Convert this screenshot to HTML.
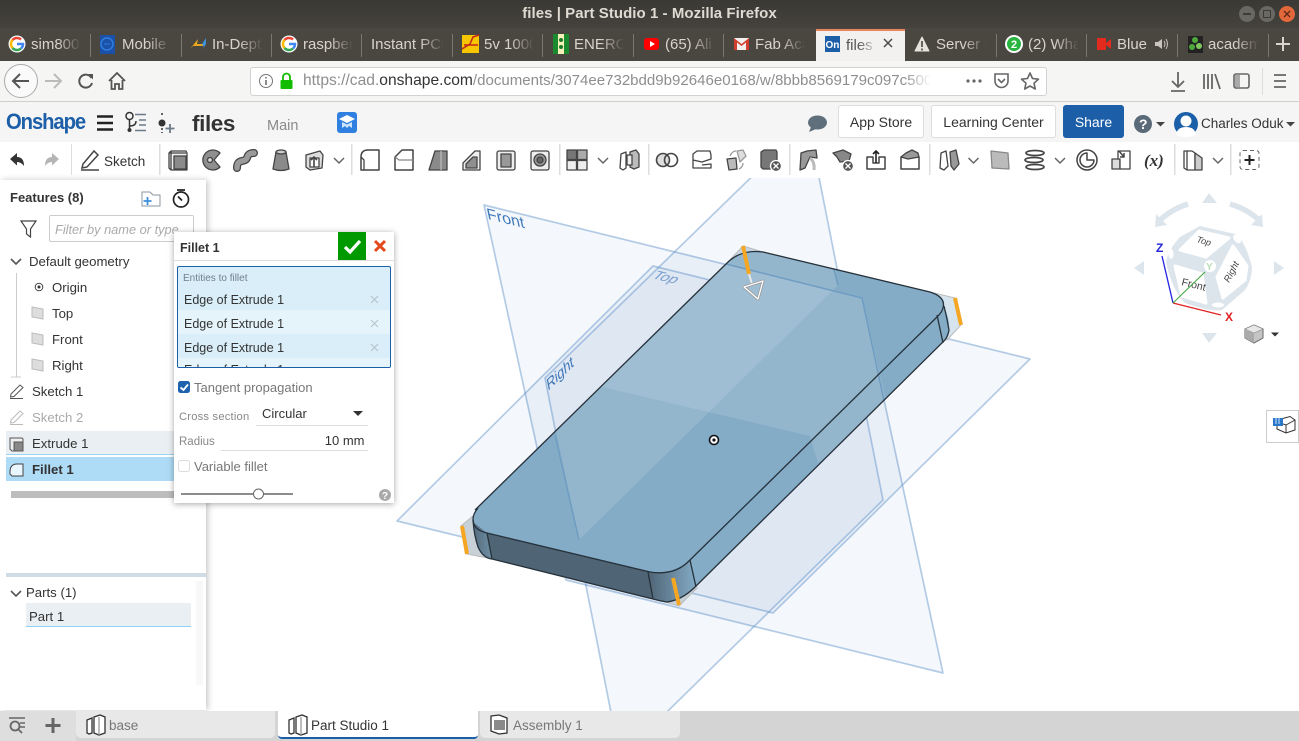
<!DOCTYPE html>
<html><head><meta charset="utf-8"><title>files | Part Studio 1 - Mozilla Firefox</title>
<style>
html,body{margin:0;padding:0;width:1299px;height:741px;overflow:hidden;background:#fff;font-family:"Liberation Sans",sans-serif;}
.a{position:absolute;}
.t{position:absolute;white-space:nowrap;height:20px;line-height:20px;}
.tab{position:absolute;top:28px;height:33px;line-height:34px;color:#d9d5cd;font-size:15px;white-space:nowrap;overflow:hidden;}
.fade{position:absolute;top:30px;height:30px;width:24px;background:linear-gradient(to right,rgba(74,70,64,0),#4a4640);}
.sep{position:absolute;top:34px;height:23px;width:1px;background:#7b7770;}
.btn{position:absolute;top:105px;height:31px;line-height:32px;border:1px solid #ddd;border-radius:3px;background:#fff;text-align:center;font-size:14px;color:#333;box-sizing:content-box;}
.f{font-size:13.200px;color:#333;}
.row{position:absolute;left:178px;width:213px;}
svg{position:absolute;overflow:visible;}
</style></head><body>

<!-- title bar -->
<div class="a" style="left:0;top:0;width:1299px;height:28px;background:linear-gradient(#3a3935,#45423c);"></div>
<div class="a" style="left:0;top:28px;width:1299px;height:33px;background:#4a4640;"></div>
<div class="t" style="left:0;width:1299px;text-align:center;top:4px;font-size:15px;font-weight:bold;color:#dfdbd2;letter-spacing:.05px;">files | Part Studio 1 - Mozilla Firefox</div>
<svg style="left:0;top:0" width="1299" height="28">
<circle cx="1247" cy="14" r="8" fill="#6a6862"/><rect x="1243" y="13" width="8" height="2" fill="#3c3b37"/>
<circle cx="1267" cy="14" r="8" fill="#6a6862"/><rect x="1263.500" y="10.500" width="7" height="7" fill="none" stroke="#3c3b37"/>
<circle cx="1287" cy="14" r="8" fill="#e2673a"/><path d="M1284,11 L1290,17 M1290,11 L1284,17" stroke="#5c2a15" stroke-width="1.300"/>
</svg>

<!-- tabs -->
<div class="a" style="left:816px;top:29px;width:89px;height:32px;background:#f2f1ef;border-top:2px solid #e9855c;box-sizing:border-box;"></div>
<div class="tab" style="left:31px;width:49px;">sim800</div><div class="fade" style="left:57px"></div>
<div class="tab" style="left:122px;width:48px;">Mobile</div><div class="fade" style="left:147px"></div>
<div class="tab" style="left:212px;width:50px;">In-Depth</div><div class="fade" style="left:239px"></div>
<div class="tab" style="left:303px;width:49px;">raspberry</div><div class="fade" style="left:329px"></div>
<div class="tab" style="left:371px;width:72px;">Instant PCB</div><div class="fade" style="left:420px"></div>
<div class="tab" style="left:484px;width:49px;">5v 1000</div><div class="fade" style="left:510px"></div>
<div class="tab" style="left:574px;width:49px;">ENERGY</div><div class="fade" style="left:600px"></div>
<div class="tab" style="left:665px;width:49px;">(65) Ali</div><div class="fade" style="left:691px"></div>
<div class="tab" style="left:755px;width:49px;">Fab Acad</div><div class="fade" style="left:781px"></div>
<div class="tab" style="left:846px;width:35px;color:#555;top:29px;">files</div>
<div class="a" style="left:858px;top:31px;width:20px;height:29px;background:linear-gradient(to right,rgba(242,241,239,0),#f2f1ef);"></div>
<div class="tab" style="left:936px;width:50px;">Server N</div><div class="fade" style="left:963px"></div>
<div class="tab" style="left:1028px;width:50px;">(2) What</div><div class="fade" style="left:1055px"></div>
<div class="tab" style="left:1117px;width:34px;">Blue</div>
<div class="tab" style="left:1208px;width:50px;">academ</div><div class="fade" style="left:1235px"></div>
<div class="sep" style="left:90px"></div><div class="sep" style="left:181px"></div><div class="sep" style="left:271px"></div><div class="sep" style="left:361px"></div><div class="sep" style="left:452px"></div><div class="sep" style="left:542px"></div><div class="sep" style="left:633px"></div><div class="sep" style="left:723px"></div><div class="sep" style="left:996px"></div><div class="sep" style="left:1086px"></div><div class="sep" style="left:1177px"></div><div class="sep" style="left:1268px"></div>
<svg style="left:0;top:28px" width="1299" height="33">
<g id="gg"><circle cx="17" cy="16" r="8.500" fill="#fff"/><path d="M17,10 A6,6 0 0 1 21,11.500" stroke="#ea4335" stroke-width="2.500" fill="none"/><path d="M12.500,12 A6,6 0 0 1 17,10" stroke="#ea4335" stroke-width="2.500" fill="none"/><path d="M12.500,12 A6,6 0 0 0 12.500,20" stroke="#fbbc05" stroke-width="2.500" fill="none"/><path d="M12.500,20 A6,6 0 0 0 21,20.500" stroke="#34a853" stroke-width="2.500" fill="none"/><path d="M21,20.500 A6,6 0 0 0 23,16 H17" stroke="#4285f4" stroke-width="2.500" fill="none"/></g>
<use href="#gg" x="272"/>
<rect x="100" y="7" width="15" height="19" fill="#1b52a8"/><circle cx="107" cy="16" r="6" fill="none" stroke="#2f7de0" stroke-width="1.500"/><path d="M104,16 H110" stroke="#2f7de0"/>
<path d="M190,21 L198,11 L197,16 H205 L203,18 H193Z" fill="#e9a61f"/><path d="M204,19 L200,26 L206,16 L206,10 L202,16Z" fill="#3f93d8"/>
<rect x="462" y="7" width="17" height="18" fill="#f7c600"/><path d="M462,21 L470,16 L473,9 L479,7 M464,17 H478" stroke="#c3271a" stroke-width="1.500" fill="none"/>
<rect x="553" y="6" width="16" height="20" fill="#198a2d"/><rect x="558" y="6" width="6" height="20" fill="#f5f1b8"/><circle cx="561" cy="12" r="2" fill="#1a7a2a"/><circle cx="561" cy="19" r="2" fill="#1a7a2a"/>
<rect x="644" y="10" width="15" height="12" rx="3" fill="#f00"/><path d="M650,13 L655,16 L650,19Z" fill="#fff"/>
<rect x="734" y="10" width="15" height="12" fill="#f4f0ee"/><path d="M734,10 L741.500,16 L749,10 V22 H746 V14.500 L741.500,18 L737,14.500 V22 H734Z" fill="#d23f31"/>
<rect x="825" y="8" width="15" height="16" fill="#1c5ea8"/><text x="825.500" y="20" font-size="10" font-weight="bold" fill="#fff" font-family="Liberation Sans">On</text>
<path d="M884,11 L892,19 M892,11 L884,19" stroke="#4a4a4a" stroke-width="1.500"/>
<path d="M915,23 L922,9 L929,23Z" fill="#e6e3dd" stroke="#e6e3dd" stroke-linejoin="round"/><path d="M922,13 V19 M922,20.500 V22.500" stroke="#4a4640" stroke-width="1.600"/>
<circle cx="1014" cy="16" r="9" fill="#fff"/><circle cx="1014" cy="16" r="7" fill="#29b43f"/><text x="1011" y="20" font-size="11" font-weight="bold" fill="#fff" font-family="Liberation Sans">2</text>
<rect x="1097" y="10" width="9" height="12" fill="#e32a1e"/><path d="M1106,15 L1111,11 V21 L1106,17Z" fill="#e32a1e"/>
<path d="M1155,14 H1158 L1162,11 V21 L1158,18 H1155Z" fill="#c9c5bd"/><path d="M1164,13 Q1166,16 1164,19 M1166,11 Q1169,16 1166,21" stroke="#c9c5bd" fill="none"/>
<rect x="1188" y="8" width="15" height="17" fill="#222"/><circle cx="1195" cy="12" r="3" fill="#4ea83c"/><circle cx="1192" cy="19" r="3" fill="#4ea83c"/><circle cx="1199" cy="18" r="3" fill="#7fc75e"/>
<path d="M1283,9 V23 M1276,16 H1290" stroke="#d9d5cd" stroke-width="2"/>
</svg>

<!-- nav bar -->
<div class="a" style="left:0;top:61px;width:1299px;height:40px;background:#f5f5f3;border-bottom:1px solid #cfcfcd;"></div>
<div class="a" style="left:250px;top:67px;width:795px;height:27px;background:#fff;border:1px solid #d2d2d0;border-radius:3px;"></div>
<div class="t" style="left:303px;top:71px;font-size:15.600px;color:#8e8e8e;width:627px;overflow:hidden;">https://cad.<span style="color:#333">onshape.com</span><span style="font-size:15.050px">/documents/3074ee732bdd9b92646e0168/w/8bbb8569179c097c500</span></div>
<div class="a" style="left:905px;top:68px;width:26px;height:26px;background:linear-gradient(to right,rgba(255,255,255,0),#fff);"></div>
<svg style="left:0;top:61px" width="1299" height="40">
<circle cx="21" cy="20" r="16.500" fill="#fafafa" stroke="#aaa"/>
<path d="M29,20 H13 M20,13 L13,20 L20,27" stroke="#555" stroke-width="2" fill="none"/>
<path d="M45,20 H61 M54,13 L61,20 L54,27" stroke="#bbb" stroke-width="2" fill="none"/>
<path d="M91.500,17 A6.500,6.500 0 1 0 92,22" stroke="#555" stroke-width="2" fill="none"/><path d="M88,13 L93,13 L93,18.500Z" fill="#555"/>
<path d="M109,20 L117,12 L125,20 M111.500,19 V28 H115 V23 H119 V28 H122.500 V19" stroke="#555" stroke-width="1.800" fill="none"/>
<circle cx="266" cy="20" r="6.500" fill="none" stroke="#777"/><path d="M266,19 V24 M266,16 V17.500" stroke="#666" stroke-width="1.500"/>
<rect x="280.500" y="19" width="12" height="9" rx="1" fill="#12bc00"/><path d="M283,19 V16 A3.500,3.500 0 0 1 290,16 V19" fill="none" stroke="#12bc00" stroke-width="1.800"/>
<circle cx="968" cy="20" r="1.600" fill="#666"/><circle cx="974" cy="20" r="1.600" fill="#666"/><circle cx="980" cy="20" r="1.600" fill="#666"/>
<path d="M995,13 H1008 V20 A6.500,6.500 0 0 1 995,20Z" fill="none" stroke="#666" stroke-width="1.600"/><path d="M998,18 L1001.500,21.500 L1005,18" stroke="#666" stroke-width="1.600" fill="none"/>
<path d="M1030,12 L1032.500,17.500 L1038.500,18.200 L1034,22.200 L1035.300,28 L1030,25 L1024.700,28 L1026,22.200 L1021.500,18.200 L1027.500,17.500Z" fill="none" stroke="#666" stroke-width="1.600" stroke-linejoin="round"/>
<path d="M1178,11 V25 M1172,20 L1178,26 L1184,20 M1171,30 H1185" stroke="#666" stroke-width="1.800" fill="none"/>
<path d="M1204,13 V28 M1208,13 V28 M1212,13 V28 M1215,13 L1220,28" stroke="#666" stroke-width="1.800" fill="none"/>
<rect x="1234" y="13" width="15" height="14" rx="2" fill="none" stroke="#666" stroke-width="1.600"/><rect x="1235" y="14" width="5" height="12" fill="#aaa"/>
<rect x="1262" y="7" width="1" height="27" fill="#ddd"/>
<path d="M1274,14 H1286 M1274,20 H1286 M1274,26 H1286" stroke="#666" stroke-width="1.800"/>
</svg>

<!-- onshape bar -->
<div class="a" style="left:0;top:102px;width:1299px;height:40px;background:#f5f5f5;"></div>
<div class="t" style="left:6px;top:112px;font-size:22.500px;font-weight:bold;color:#1c5ea8;letter-spacing:-1.200px;transform:scaleX(.9);transform-origin:left center;">Onshape</div>
<div class="t" style="left:192px;top:114px;font-size:22.500px;font-weight:bold;color:#333;letter-spacing:-.4px;">files</div>
<div class="t" style="left:267px;top:116px;font-size:14.500px;color:#8a8a8a;">Main</div>
<div class="btn" style="left:838px;width:84px;">App Store</div>
<div class="btn" style="left:931px;width:123px;">Learning Center</div>
<div class="btn" style="left:1063px;width:61px;height:33px;background:#1c5ea8;border:0;color:#fff;line-height:34px;">Share</div>
<div class="t" style="left:1201px;top:114px;font-size:13.500px;color:#333;">Charles Oduk</div>
<svg style="left:0;top:102px" width="1299" height="40">
<path d="M97,14.500 H113 M97,21 H113 M97,27.500 H113" stroke="#222" stroke-width="2.500"/>
<circle cx="129.500" cy="14" r="3.500" fill="none" stroke="#333" stroke-width="1.500"/><circle cx="129.500" cy="28" r="2" fill="#333"/>
<path d="M129.500,17.500 V26 M129.500,24 Q136,24 136,19" fill="none" stroke="#333" stroke-width="1.500"/>
<path d="M135,12.500 H146 M139,18 H146 M139,23 H146 M135,28.500 H146" stroke="#6a7a88" stroke-width="1.500"/>
<path d="M162,11 V15 M162,26 V31" stroke="#333" stroke-width="1.500" stroke-dasharray="2 2"/><circle cx="162" cy="21" r="3.500" fill="#333"/>
<path d="M170,22 V31 M165.500,26.500 H174.500" stroke="#6a7a88" stroke-width="1.800"/>
<rect x="337" y="10" width="20" height="21" rx="3" fill="#2f80e0"/><path d="M339,17 L347,13 L355,17 L347,21Z" fill="#fff"/><path d="M342,20 V26 L345,24 L347,26 L349,24 L352,26 V20 L347,22.500Z" fill="#cfe3fa"/>
<ellipse cx="817.500" cy="20.500" rx="9.500" ry="7" fill="#5f6f7c"/><path d="M811,25 L809,30 L816,27Z" fill="#5f6f7c"/>
<circle cx="1143" cy="22" r="9" fill="#5a6a78"/><text x="1139" y="27" font-size="14" font-weight="bold" fill="#fff" font-family="Liberation Sans">?</text>
<path d="M1156,20 H1165 L1160.500,24.500Z" fill="#444"/>
<circle cx="1186" cy="22" r="12" fill="#1a5fa8"/><circle cx="1186" cy="19" r="5.500" fill="#fff"/><path d="M1176,33 Q1177,25 1186,25 Q1195,25 1196,33 Q1191,35 1186,35 Q1181,35 1176,33Z" fill="#fff"/>
<path d="M1286,20 H1295 L1290.500,24.500Z" fill="#444"/>
</svg>

<!-- toolbar -->
<div class="t" style="left:104px;top:152px;font-size:13.500px;color:#333;">Sketch</div>
<svg style="left:0;top:142px" width="1299" height="36" font-family="Liberation Serif">
<g fill="#ddd"><rect x="71" y="2" width="1" height="31"/><rect x="159" y="2" width="1.500" height="31"/><rect x="351" y="2" width="1.500" height="31"/><rect x="559" y="2" width="1.500" height="31"/><rect x="648" y="2" width="1.500" height="31"/><rect x="789" y="2" width="1.500" height="31"/><rect x="929" y="2" width="1.500" height="31"/><rect x="1174" y="2" width="1.500" height="31"/><rect x="1230" y="2" width="1.500" height="31"/></g>
<path d="M10,17 L17,11 V15 Q24,15 24,24 Q21,20 17,20 V23.500Z" fill="#333"/>
<path d="M59,17 L52,11 V15 Q45,15 45,24 Q48,20 52,20 V23.500Z" fill="#b5b5b5"/>
<path d="M83,22 L94,9 L98,13 L87,25 L82,26Z M81,28 H99" fill="none" stroke="#444" stroke-width="1.500"/>
<g stroke="#444" stroke-width="1.300" stroke-linejoin="round">
<g transform="translate(178,18)"><path d="M-9,-7 L-7,-9 H8 L9,-7 V10 H-7 L-9,8Z" fill="#eee"/><path d="M-7,-9 V10 M-9,-7 H8" fill="none"/><rect x="-4" y="-4" width="12" height="13" fill="#8b8b8b"/></g>
<g transform="translate(212,18)"><path d="M8,-7 A10,10 0 1 0 8,7 L2,0Z" fill="#8f8f8f"/><circle cx="-2" cy="0" r="2.500" fill="#ddd"/></g>
<g transform="translate(245,18)"><path d="M-8,8 C-8,-2 0,3 2,-2 C3,-6 5,-7 9,-7" fill="none" stroke-width="8" stroke-linecap="round"/><path d="M-8,8 C-8,-2 0,3 2,-2 C3,-6 5,-7 9,-7" fill="none" stroke="#9a9a9a" stroke-width="5.500" stroke-linecap="round"/></g>
<g transform="translate(281,18)"><path d="M-5,-8 L-8,9 Q0,12 8,9 L5,-8Z" fill="#8a8a8a"/><ellipse cx="0" cy="-8" rx="5" ry="2" fill="#ccc"/></g>
<g transform="translate(314,18)"><path d="M-8,-5 L6,-9 L9,-5 L8,8 L-4,10 L-8,7Z" fill="#ddd"/><rect x="-4" y="-2" width="9" height="9" fill="#fff"/><path d="M0,7 V-3 M-3,0 L0,-3 L3,0" fill="none" stroke-width="1.600"/></g>
<g transform="translate(370,18)"><path d="M-9,10 V-3 Q-9,-10 -2,-10 H9 V10Z" fill="#fff" stroke-width="1.500"/><path d="M-9,-3 L-6,0 V10" fill="none"/></g>
<g transform="translate(404,18)"><path d="M-9,10 V-3 L-2,-10 H9 V10Z" fill="#fff" stroke-width="1.500"/><path d="M-9,-3 L-5,0 H9" fill="none" stroke="#888"/></g>
<g transform="translate(438,18)"><path d="M-9,10 L-3,-9 H9 V10Z" fill="#8a8a8a"/><path d="M3,-9 V10" stroke="#bbb"/></g>
<g transform="translate(472,18)"><path d="M-9,10 V3 L3,-9 H8 V10Z" fill="#eee"/><path d="M-6,8 V4 L1,-3 H5 V8Z" fill="#8f8f8f"/></g>
<g transform="translate(506,18)"><rect x="-9" y="-9" width="18" height="19" rx="2" fill="#eee"/><rect x="-5" y="-6" width="10" height="13" fill="#999"/></g>
<g transform="translate(540,18)"><rect x="-9" y="-9" width="18" height="19" rx="2" fill="#eee"/><circle cx="0" cy="0" r="6" fill="#999"/><circle cx="0" cy="0" r="3" fill="#666"/></g>
<g transform="translate(577,18)"><rect x="-10" y="-10" width="9.500" height="9.500" fill="#777"/><rect x="0.500" y="-10" width="9.500" height="9.500" fill="#aaa"/><rect x="-10" y="0.500" width="9.500" height="9.500" fill="#eee"/><rect x="0.500" y="0.500" width="9.500" height="9.500" fill="#eee"/></g>
<g transform="translate(629,18)"><path d="M-8,-6 L-3,-8 V8 L-6,10 L-9,8Z" fill="#fff"/><path d="M1,-8 L7,-10 L10,-6 V7 L5,9 L1,7Z" fill="#bbb"/><path d="M-2,-5 H3 V5 H-2Z" fill="#eee"/></g>
<g transform="translate(667,18)"><circle cx="-4" cy="0" r="6.500" fill="#ddd" stroke-width="1.600"/><circle cx="4" cy="0" r="6.500" fill="none" stroke-width="1.600"/></g>
<g transform="translate(702,18)"><path d="M-9,-6 L-5,-9 H8 L9,-5 V-1 L0,2 L-9,0Z" fill="#fff"/><path d="M-9,0 V8 H9 V4 L0,5" fill="none"/></g>
<g transform="translate(736,18)"><path d="M-9,-1 L0,-2 L1,9 L-7,10Z" fill="#bbb"/><path d="M1,-9 L7,-10 L10,-4 L4,2Z" fill="#ddd" stroke="#999"/><path d="M-6,-4 Q-4,-9 0,-9 M7,3 Q7,7 3,9" fill="none" stroke="#999"/></g>
<g transform="translate(770,18)"><path d="M-9,-8 L-6,-10 H6 L7,-8 V9 H-7 L-9,7Z" fill="#777"/><circle cx="6" cy="6" r="5.500" fill="#555" stroke="#fff"/><path d="M3.500,3.500 L8.500,8.500 M8.500,3.500 L3.500,8.500" stroke="#fff"/></g>
<g transform="translate(808,18)"><path d="M-7,-7 L-1,-9 L8,-10 L9,-2 L2,-3 L-3,8 L-8,10Z" fill="#999"/><path d="M2,-2 Q7,2 6,10" fill="none" stroke="#bbb" stroke-width="3"/></g>
<g transform="translate(842,18)"><path d="M-9,-7 L1,-10 L9,-6 L7,1 L-2,2 L-5,-3Z" fill="#888"/><circle cx="6" cy="6" r="5.500" fill="#555" stroke="#fff"/><path d="M3.500,3.500 L8.500,8.500 M8.500,3.500 L3.500,8.500" stroke="#fff"/></g>
<g transform="translate(876,18)"><path d="M-9,-3 L-3,-3 V3 H3 V-3 H9 V9 H-9Z" fill="#fff" stroke-width="1.500"/><path d="M0,3 V-9 M-3,-6 L0,-9 L3,-6" fill="none" stroke="#222" stroke-width="1.600"/></g>
<g transform="translate(910,18)"><path d="M-9,-3 L9,-3 V9 H-9Z" fill="#fff" stroke-width="1.500"/><path d="M-9,-3 L-4,-7 L2,-10 L8,-7 L9,-3 L-2,-1Z" fill="#999"/></g>
<g transform="translate(949,18)"><path d="M-8,-7 L-3,-9 L-1,6 L-5,10 L-9,8Z" fill="#fff"/><path d="M1,-8 L7,-10 L10,4 L5,10 L2,6Z" fill="#999"/></g>
<g transform="translate(1000,18)"><path d="M-9,-9 L8,-7 L9,9 L-8,8Z" fill="#bbb" stroke="#888"/></g>
<g transform="translate(1034,18)" fill="none" stroke-width="1.700"><ellipse cx="1" cy="-7" rx="9" ry="2.500"/><ellipse cx="0" cy="0" rx="9" ry="2.500"/><ellipse cx="1" cy="7" rx="9" ry="2.500"/></g>
<g transform="translate(1087,18)" fill="none" stroke-width="1.500"><circle cx="0" cy="0" r="10"/><path d="M0,-7 A7,7 0 1 0 7,0 H0Z"/></g>
<g transform="translate(1121,18)"><path d="M-9,-1 H-1 V9 H-9Z" fill="#ddd"/><path d="M-3,-9 H9 V9 H-1 V-1 H-3Z" fill="#fff"/><path d="M-2,-9 L3,-3 M3,-7 V-3 H-1" fill="none" stroke-width="1.500"/></g>
<g transform="translate(1193,18)"><path d="M-9,-9 H-1 L2,-7 V10 H-6 L-9,8Z" fill="#fff"/><path d="M2,-7 L9,-2 V10 H2Z" fill="#ccc"/><path d="M-6,-9 V10" fill="none"/></g>
</g>
<g stroke="#666" stroke-width="1.500" fill="none"><path d="M334,16 L339,21 L344,16"/><path d="M598,16 L603,21 L608,16"/><path d="M968.500,16 L973.500,21 L978.500,16"/><path d="M1055,16 L1060,21 L1065,16"/><path d="M1213,16 L1218,21 L1223,16"/></g>
<text x="1144" y="24" font-size="17" font-weight="bold" font-style="italic" fill="#333">(<tspan>x</tspan>)</text>
<rect x="1240" y="8.500" width="19" height="19" rx="3" fill="none" stroke="#666" stroke-dasharray="4 3"/><path d="M1249.500,13 V23 M1244.500,18 H1254.500" stroke="#222" stroke-width="2"/>
</svg>

<!-- 3D scene -->
<svg style="left:0;top:0;" width="1299" height="741" viewBox="0 0 1299 741">
<defs>
<clipPath id="view"><rect x="0" y="178" width="1299" height="533"/></clipPath>
<clipPath id="bodyc"><path d="M475,510 L727,263 Q741,249 763,252 L930,292 Q946,297 944,306 Q950,320 949,330 Q948,336 945,340 L695,587 Q682,600 667,602 Q660,601 653,599 L492,559 Q483,558 478,547 Q473,535 473,519 Q473,514 478,508Z"/></clipPath>
<linearGradient id="cg" x1="0" x2="1" y1="0" y2="0"><stop offset="0" stop-color="#4f6475"/><stop offset="1" stop-color="#84acc7"/></linearGradient>
<linearGradient id="cl" x1="0" x2="1" y1="0" y2="0"><stop offset="0" stop-color="#4f6475"/><stop offset="1" stop-color="#6f8ea5"/></linearGradient>
</defs>
<g clip-path="url(#view)">
<g fill="rgb(60,120,190)" fill-opacity=".06" stroke="rgb(80,135,195)" stroke-opacity=".42" stroke-width="1.700" stroke-linejoin="round">
<path d="M484,205 L862,298 L943,673 L566,580Z"/>
<path d="M397,521 L653,266 L1030,359 L773,613Z"/>
<path d="M545,378 L808,122 L883,500 L620,758Z"/>
</g>
<path d="M473,516 L461,526 L467,554 L492,559Z" fill="#c8d0d8" stroke="#bbb"/>
<path d="M654,599 L679,606 L697,588Z" fill="#c8d0d8" stroke="#bbb"/>
<path d="M727,263 L743,246 L763,252Z" fill="#c5d6e2" stroke="#bbb"/>
<path d="M930,292 L955,298 L961,325 L947,340Z" fill="#d6e4ee" stroke="#bbb"/>
<g clip-path="url(#bodyc)">
<rect x="460" y="240" width="500" height="370" fill="#84acc7"/>
<path d="M470,520 L487,533 L650,572 L653,610 L470,570Z" fill="#4f6475"/>
<path d="M648,572 Q675,576 690,560 L697,590 L675,610 L653,602Z" fill="url(#cg)"/>
<path d="M470,520 L487,533 L492,562 L470,555Z" fill="url(#cl)"/>
<path d="M545,378 L579,540 L838,285 L808,122Z" fill="#fff" fill-opacity=".12"/>
<path d="M590,384 L810,436 L818,463 L847,440 L886,400 L862,298 L722,263 L590,300Z" fill="#fff" fill-opacity=".12"/>
<g stroke="#6f9dc2" stroke-width="1.500" fill="none">
<path d="M722,263 L862,298 L886,410"/>
<path d="M555,435 L579,540"/>
<path d="M832,262 L838,285"/>
</g>
</g>
<g fill="none" stroke="#26323b" stroke-width="1.300">
<path d="M475,510 L727,263 Q741,249 763,252 L930,292 Q946,297 943,308 Q942,312 938,316 L690,560 Q675,576 650,572 L487,533 Q473,530 473,519 Q473,514 478,508Z"/>
<path d="M473,520 Q474,535 478,547 Q483,558 492,559 L653,599 Q660,601 667,602 Q682,600 695,587 L945,340 Q948,336 949,330 Q947,318 944,306"/>
<path d="M487,533 L492,559 M648,572 L653,599 M690,560 L696,587 M937,315 L943,343"/>
</g>
<g stroke="#f5a623" stroke-width="4">
<path d="M743,246 L749,274"/><path d="M955,298 L961,325"/><path d="M462,526 L467,554"/><path d="M673,578 L679,605"/>
</g>
<path d="M749,274 L752,284" stroke="#e8e8e8" stroke-width="2"/>
<path d="M744,287 L763,281 L758,299Z" fill="none" stroke="#999" stroke-width="2.800" stroke-linejoin="round"/>
<path d="M744,287 L763,281 L758,299Z" fill="none" stroke="#fff" stroke-width="1.300" stroke-linejoin="round"/>
<circle cx="714" cy="440" r="4.500" fill="#fff" stroke="#111" stroke-width="1.600"/><circle cx="714" cy="440" r="1.600" fill="#111"/>
<g font-family="Liberation Sans" fill="#3f78b8">
<text transform="matrix(.97,.24,.21,.97,488,219)" font-size="16.500">Front</text>
<text transform="matrix(.97,.24,-.7,.71,651,278)" font-size="15" fill="#7aa0cc">Top</text>
<text transform="matrix(.72,-.7,.2,.98,548,391)" font-size="15.500">Right</text>
</g>
</g>

<!-- view cube -->
<g fill="#dde5ec">
<path d="M1209,193 L1202,203 H1217Z"/><path d="M1134,268 L1144,261 V275Z"/><path d="M1284,268 L1274,261 V275Z"/><path d="M1209,343 L1202,333 H1217Z"/>
<path d="M1188,204 Q1172,209 1160,220" fill="none" stroke="#dde5ec" stroke-width="5.500"/><path d="M1155,227 L1156,214 L1167,225Z"/>
<path d="M1230,204 Q1247,209 1259,220" fill="none" stroke="#dde5ec" stroke-width="5.500"/><path d="M1263,227 L1262,214 L1251,225Z"/>
<path d="M1200,226 L1235,234 Q1245,240 1252,267 Q1252,280 1245,290 L1222,310 Q1210,312 1185,303 Q1172,290 1166,262 Q1168,250 1180,237Z"/>
</g>
<g fill="#fff" stroke="#fff" stroke-width="3" stroke-linejoin="round">
<path d="M1199,231 L1229,238 L1206,257 L1180,250Z"/>
<path d="M1175,266 L1202,274 L1206,303 L1182,296Z"/>
<path d="M1233,246 L1247,266 L1245,280 L1223,298 L1217,277Z"/>
</g>
<ellipse cx="1218" cy="305" rx="6" ry="2.500" fill="#fff"/><ellipse cx="1171" cy="254" rx="2.500" ry="5" fill="#fff"/><ellipse cx="1237" cy="239" rx="3" ry="5" fill="#fff" transform="rotate(-40 1237 239)"/>
<g font-family="Liberation Sans" fill="#444">
<text transform="translate(1196,242) rotate(16)" font-size="9" font-style="italic">Top</text>
<text transform="translate(1181,285) rotate(14)" font-size="10.500">Front</text>
<text transform="translate(1229,283) rotate(-62)" font-size="9.500" font-style="italic">Right</text>
</g>
<circle cx="1210" cy="266" r="6.500" fill="#fff" stroke="#dde5ec"/>
<text x="1206" y="270" font-family="Liberation Sans" font-size="10" font-weight="bold" fill="#b9e0b9">Y</text>
<path d="M1173,303 L1162,256" stroke="#2323e0" stroke-width="1.300"/>
<path d="M1173,303 L1221,315" stroke="#e02323" stroke-width="1.300"/>
<path d="M1173,303 L1205,272" stroke="#3ca83c" stroke-width="1"/>
<text x="1156" y="252" font-family="Liberation Sans" font-size="12" font-weight="bold" fill="#2323d8">Z</text>
<text x="1225" y="321" font-family="Liberation Sans" font-size="12" font-weight="bold" fill="#e02323">X</text>
<path d="M1254,325 L1263,329 V338 L1254,343 L1245,338 V329Z" fill="#c5c5c5" stroke="#666"/><path d="M1245,329 L1254,333 L1263,329 L1254,325Z" fill="#e8e8e8" stroke="#888" stroke-width=".6"/><path d="M1254,333 V343 L1245,338 V329Z" fill="#aaa"/>
<path d="M1271,332.500 H1279 L1275,336.500Z" fill="#333"/>
</svg>

<div class="a" style="left:1266px;top:410px;width:33px;height:33px;border:1px solid #ccc;background:#fff;box-sizing:border-box;"></div>
<svg style="left:1266px;top:410px" width="33" height="33">
<path d="M15,9 L24,6.500 L29,10 V20 L20,23 L11,19 V12Z M11,12 L20,15 L29,10 M20,15 V23" fill="#fff" stroke="#333"/>
<rect x="7" y="8" width="10" height="8" fill="#2a78c8"/><path d="M10,8 V14 M13,8 V14" stroke="#cfe3fa"/>
</svg>

<!-- features panel -->
<div class="a" style="left:0;top:180px;width:206px;height:530px;background:#fff;box-shadow:2px 0 6px rgba(0,0,0,.22);"></div>
<div class="t f" style="left:10px;top:188px;font-weight:bold;color:#333;font-size:13px;">Features (8)</div>
<div class="a" style="left:49px;top:215px;width:145px;height:27px;border:1px solid #ccc;border-radius:2px;box-sizing:border-box;"></div>
<div class="t" style="left:55px;top:220px;font-size:12.800px;font-style:italic;color:#aaa;">Filter by name or type</div>
<div class="t f" style="left:29px;top:252px;">Default geometry</div>
<div class="t f" style="left:52px;top:278px;">Origin</div>
<div class="t f" style="left:52px;top:304px;">Top</div>
<div class="t f" style="left:52px;top:330px;">Front</div>
<div class="t f" style="left:52px;top:356px;">Right</div>
<div class="t f" style="left:32px;top:382px;">Sketch 1</div>
<div class="t f" style="left:32px;top:408px;color:#aaa;">Sketch 2</div>
<div class="a" style="left:6px;top:431px;width:184px;height:24px;background:#eaeff3;border-bottom:1px solid #9fd4f0;box-sizing:border-box;"></div>
<div class="t f" style="left:32px;top:434px;">Extrude 1</div>
<div class="a" style="left:6px;top:457px;width:184px;height:24px;background:#aedbf5;"></div>
<div class="t f" style="left:32px;top:460px;font-weight:bold;">Fillet 1</div>
<div class="a" style="left:11px;top:491px;width:165px;height:7px;background:#bdbdbd;"></div>
<div class="a" style="left:6px;top:573px;width:200px;height:4px;background:#cfdbe5;"></div>
<div class="a" style="left:196px;top:581px;width:7px;height:104px;background:#f8f8f8;"></div>
<div class="t f" style="left:26px;top:583px;">Parts (1)</div>
<div class="a" style="left:26px;top:603px;width:165px;height:24px;background:#eaeff3;border-bottom:1px solid #8fd3f4;box-sizing:border-box;"></div>
<div class="t f" style="left:29px;top:607px;">Part 1</div>
<svg style="left:0;top:180px" width="206" height="460">
<path d="M142,12 H150 L153,15 H160 V26 H142Z" fill="none" stroke="#8a97a2"/><path d="M147.500,17 V25 M143.500,21 H151.500" stroke="#3f8fdc" stroke-width="1.800"/>
<circle cx="181" cy="19.500" r="7.500" fill="none" stroke="#222" stroke-width="1.700"/><path d="M177,10 H185 M178,16.500 L182,20.500" stroke="#222" stroke-width="1.700"/>
<path d="M21,41 H36 L30.500,49 V57 L26.500,54 V49Z" fill="none" stroke="#444" stroke-width="1.200"/>
<path d="M11,79 L16,84 L21,79" stroke="#555" stroke-width="1.600" fill="none"/>
<path d="M16.500,93 V197 M11,197 H21" stroke="#ccc"/>
<circle cx="39" cy="107" r="3.800" fill="none" stroke="#444"/><circle cx="39" cy="107" r="1.500" fill="#333"/>
<g fill="#ddd" stroke="#bbb"><path d="M32,127 L43,129 V139 L32,137Z"/><path d="M32,153 L43,155 V165 L32,163Z"/><path d="M32,179 L43,181 V191 L32,189Z"/></g>
<path d="M11,214 L20,205 L23,207.500 L14,216.500 L10.500,217Z M10,218.500 H23" fill="none" stroke="#555"/>
<path d="M11,240 L20,231 L23,233.500 L14,242.500 L10.500,243Z M10,244.500 H23" fill="none" stroke="#bbb"/>
<g stroke="#555"><path d="M10,258 H22 L23,259 V271 H12 L10,269Z" fill="#eee"/><rect x="14" y="262" width="9" height="9" fill="#888"/></g>
<path d="M10,292 Q10,284 17,284 H23 V296 H12 L10,294Z" fill="#eaf6fd" stroke="#444"/>
<path d="M11,411 L16,416 L21,411" stroke="#555" stroke-width="1.600" fill="none"/>
</svg>

<!-- fillet dialog -->
<div class="a" style="left:174px;top:232px;width:220px;height:271px;background:#fff;box-shadow:0 1px 6px rgba(0,0,0,.35);"></div>
<div class="t" style="left:180px;top:238px;font-size:12.500px;font-weight:bold;color:#333;">Fillet 1</div>
<div class="a" style="left:338px;top:232px;width:28px;height:28px;background:#009a00;"></div>
<div class="a" style="left:174px;top:260px;width:220px;height:1px;background:#ddd;"></div>
<div class="a" style="left:177px;top:266px;width:214px;height:102px;border:1px solid #1a5fa8;border-radius:2px;background:#d9eef8;box-sizing:border-box;overflow:hidden;">
  <div class="a" style="left:0;top:43px;width:212px;height:24px;background:#e5f4fb;"></div>
  <div class="a" style="left:0;top:91px;width:212px;height:12px;background:#e5f4fb;"></div>
  <div class="t" style="left:5px;top:2px;font-size:10px;color:#6f7f8a;">Entities to fillet</div>
  <div class="t" style="left:6px;top:23px;font-size:12.500px;color:#333;">Edge of Extrude 1</div>
  <div class="t" style="left:6px;top:47px;font-size:12.500px;color:#333;">Edge of Extrude 1</div>
  <div class="t" style="left:6px;top:71px;font-size:12.500px;color:#333;">Edge of Extrude 1</div>
  <div class="t" style="left:6px;top:93px;font-size:12.500px;color:#333;">Edge of Extrude 1</div>
</div>
<div class="t" style="left:194px;top:378px;font-size:13px;color:#777;">Tangent propagation</div>
<div class="t" style="left:179px;top:407px;font-size:11.200px;color:#888;letter-spacing:.2px;">Cross section</div>
<div class="t" style="left:262px;top:404px;font-size:13px;color:#333;">Circular</div>
<div class="a" style="left:256px;top:425px;width:112px;height:1px;background:#ddd;"></div>
<div class="t" style="left:179px;top:432px;font-size:11.500px;color:#888;">Radius</div>
<div class="t" style="left:300px;width:64.500px;text-align:right;top:431px;font-size:13px;color:#333;">10 mm</div>
<div class="a" style="left:221px;top:450px;width:147px;height:1px;background:#ddd;"></div>
<div class="t" style="left:194px;top:457px;font-size:13px;color:#777;">Variable fillet</div>
<svg style="left:174px;top:232px" width="220" height="271">
<path d="M171,15 L176,20 L186,9" stroke="#fff" stroke-width="3.200" fill="none"/>
<path d="M201,9 L211,19 M211,9 L201,19" stroke="#e2491d" stroke-width="3"/>
<g stroke="#b5c2ca" stroke-width="1"><path d="M197,64 L204,71 M204,64 L197,71"/><path d="M197,88 L204,95 M204,88 L197,95"/><path d="M197,112 L204,119 M204,112 L197,119"/></g>
<rect x="4.500" y="149.500" width="11" height="11" rx="2" fill="#1f62ae" stroke="#1f62ae"/><path d="M6.500,155.500 L9.500,158 L14,152.500" stroke="#fff" stroke-width="1.800" fill="none"/>
<rect x="4.500" y="228.500" width="11" height="11" rx="2" fill="#fff" stroke="#ddd"/>
<path d="M179,179 H189 L184,184Z" fill="#333"/>
<path d="M7,262 H119" stroke="#666" stroke-width="1.500"/>
<circle cx="84.500" cy="262" r="5" fill="#fff" stroke="#666"/>
<circle cx="211" cy="263" r="6" fill="#aaa"/><text x="208" y="267" font-size="10" font-weight="bold" fill="#fff" font-family="Liberation Sans">?</text>
</svg>

<!-- bottom bar -->
<div class="a" style="left:0;top:711px;width:1299px;height:30px;background:#d4d4d4;"></div>
<div class="a" style="left:0;top:711px;width:76px;height:30px;background:#dedede;"></div>
<div class="a" style="left:76px;top:711px;width:199px;height:27px;background:#e8e8e8;border-radius:0 0 5px 5px;"></div>
<div class="a" style="left:278px;top:711px;width:200px;height:28px;background:#fff;border-bottom:2px solid #1a5fa8;border-radius:0 0 4px 4px;box-sizing:border-box;"></div>
<div class="a" style="left:480px;top:711px;width:200px;height:27px;background:#e8e8e8;border-radius:0 0 5px 5px;"></div>
<div class="t" style="left:109px;top:716px;font-size:13.500px;color:#777;">base</div>
<div class="t" style="left:311px;top:716px;font-size:13.500px;color:#333;">Part Studio 1</div>
<div class="t" style="left:513px;top:716px;font-size:13.500px;color:#777;">Assembly 1</div>
<svg style="left:0;top:711px" width="700" height="30">
<path d="M9,7 H25 M20,12 H25 M20,16 H25" stroke="#666" stroke-width="1.600"/><circle cx="15" cy="15" r="4.500" fill="none" stroke="#666" stroke-width="1.800"/><path d="M18,18 L22,22" stroke="#666" stroke-width="1.800"/>
<path d="M53,7 V22 M45.500,14.500 H60.500" stroke="#666" stroke-width="3"/>
<g id="ps" fill="#fff" stroke="#333" stroke-width="1.300"><path d="M87,9 L92,7 V22 L89,23 L87,22Z"/><path d="M94,6 L100,4 L105,6 V22 L99,24 L94,22Z"/><path d="M99,6 V24" fill="none" stroke="#999"/></g>
<use href="#ps" x="202"/>
<path d="M491,5 L499,4 L507,7 V22 L499,23 L491,20Z" fill="#fff" stroke="#333" stroke-width="1.300"/><path d="M494,9 L505,9 V19 L494,19Z" fill="#8a8a8a"/>
</svg>
</body></html>
